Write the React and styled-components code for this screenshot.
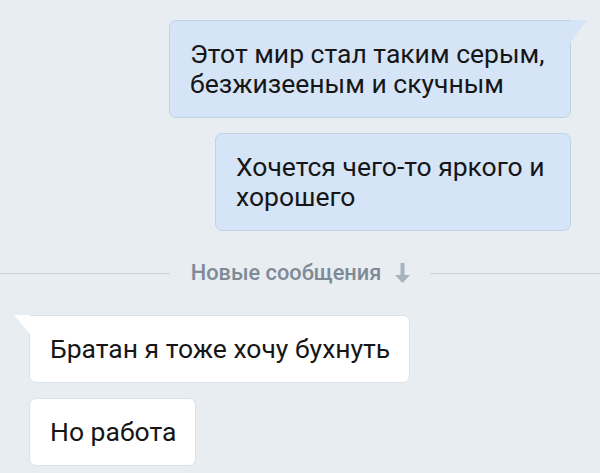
import React from "react";
import styled, { createGlobalStyle, css } from "styled-components";

const Global = createGlobalStyle`
  html, body {
    margin: 0;
    padding: 0;
    background: #e8edf2;
  }
  body {
    font-family: Roboto, "Noto Sans", "Liberation Sans", sans-serif;
    -webkit-font-smoothing: antialiased;
  }
`;

const Chat = styled.div`
  display: flex;
  flex-direction: column;
  gap: 15px;
  padding: 20px 29px 0 29px;
  min-height: 473px;
  box-sizing: border-box;
  background: #e8edf2;
`;

const Row = styled.div`
  display: flex;
  justify-content: ${(p) => (p.$out ? "flex-end" : "flex-start")};
`;

const Bubble = styled.div`
  position: relative;
  box-sizing: border-box;
  padding: 18px 19px 18px 20px;
  font-size: 26.5px;
  line-height: 30px;
  color: #161616;
  border-radius: 7px;
  width: ${(p) => (p.$width ? `${p.$width}px` : "fit-content")};
  ${(p) =>
    p.$out
      ? css`
          background: #d5e4f6;
          border: 1px solid #c2d2e5;
        `
      : css`
          background: #ffffff;
          border: 1px solid #dde2e8;
        `}
  ${(p) =>
    p.$tail &&
    p.$out &&
    css`
      border-top-right-radius: 0;
      &::after {
        content: "";
        position: absolute;
        top: -1px;
        right: -17px;
        width: 17px;
        height: 23px;
        background: #d5e4f6;
        clip-path: polygon(0 0, 100% 0, 0 100%);
      }
    `}
  ${(p) =>
    p.$tail &&
    !p.$out &&
    css`
      border-top-left-radius: 0;
      &::after {
        content: "";
        position: absolute;
        top: -1px;
        left: -16px;
        width: 16px;
        height: 19px;
        background: #ffffff;
        clip-path: polygon(0 0, 100% 0, 100% 100%);
      }
    `}
`;

const Separator = styled.div`
  display: flex;
  align-items: center;
  margin: 15px -29px 15px;
  height: 24px;
`;

const Line = styled.div`
  flex: 1;
  height: 1px;
  background: #cbd2d9;
`;

const SepLabel = styled.div`
  display: flex;
  align-items: center;
  gap: 14px;
  padding: 0 20px 0 21px;
  font-size: 21.8px;
  font-weight: 500;
  line-height: 24px;
  color: #7f8a96;
`;

const Arrow = () => (
  <svg width="15" height="20" viewBox="0 0 15 20" style={{ display: "block", marginTop: "-1px" }}>
    <path d="M5.5 0h4v12h5.5L7.5 20L0 12h5.5z" fill="#a8b3c0" />
  </svg>
);

export default function App() {
  return (
    <>
      <Global />
      <Chat>
        <Row $out>
          <Bubble $out $tail $width={402}>
            Этот мир стал таким серым, безжизееным и скучным
          </Bubble>
        </Row>
        <Row $out>
          <Bubble $out $width={356}>
            Хочется чего-то яркого и хорошего
          </Bubble>
        </Row>
        <Separator>
          <Line />
          <SepLabel>
            Новые сообщения
            <Arrow />
          </SepLabel>
          <Line />
        </Separator>
        <Row>
          <Bubble $tail>Братан я тоже хочу бухнуть</Bubble>
        </Row>
        <Row>
          <Bubble>Но работа</Bubble>
        </Row>
      </Chat>
    </>
  );
}
